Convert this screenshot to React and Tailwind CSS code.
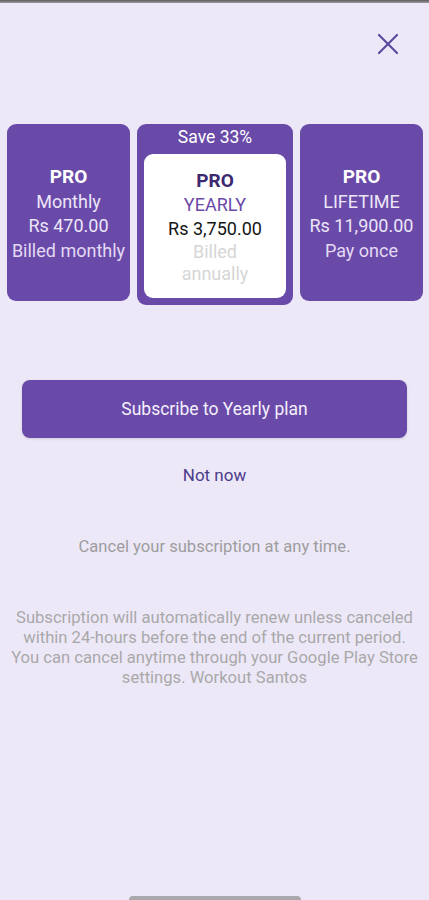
import React from 'react';

const plans = [
  { id: 'monthly', name: 'Monthly', price: 'Rs 470.00', note: 'Billed monthly' },
  { id: 'yearly', name: 'YEARLY', price: 'Rs 3,750.00', note: 'Billed annually' },
  { id: 'lifetime', name: 'LIFETIME', price: 'Rs 11,900.00', note: 'Pay once' },
];

const SideCard = ({ plan }) => (
  <div className="w-[123px] h-[177px] rounded-[9px] bg-[#6a4aa9] flex flex-col items-center justify-center text-center text-[18px] leading-[24.5px] text-[#ece6f8] pt-[3px]">
    <span className="font-bold text-[19px] text-white">PRO</span>
    <span>{plan.name}</span>
    <span>{plan.price}</span>
    <span className="text-[#e3daf3] whitespace-nowrap">{plan.note}</span>
  </div>
);

const App = () => {
  const selected = plans[1];

  return (
    <div className="relative w-[429px] h-[900px] bg-[#ede8f8] overflow-hidden" style={{ fontFamily: 'Roboto, "Noto Sans", sans-serif' }}>
      <div className="h-[3px] bg-gradient-to-b from-[#5e5e5e] to-[#9a9a9a]" />

      {/* Cerrar */}
      <div className="flex justify-end pr-[29px] pt-[29px]">
        <button className="w-[24px] h-[24px] flex items-center justify-center text-[#5b4a9c]">
          <svg width="24" height="24" viewBox="0 0 24 24" fill="none" stroke="currentColor" strokeWidth="2.2" strokeLinecap="round">
            <line x1="3" y1="3" x2="21" y2="21" />
            <line x1="21" y1="3" x2="3" y2="21" />
          </svg>
        </button>
      </div>

      {/* Planes */}
      <div className="flex items-start gap-[7px] pl-[7px] mt-[68px]">
        <SideCard plan={plans[0]} />
        <div className="w-[156px] h-[181px] rounded-[9px] bg-[#6a4aa9] flex flex-col px-[7px] pb-[7px]">
          <div className="h-[30px] pb-[4px] flex items-center justify-center text-white text-[17.5px]">Save 33%</div>
          <div className="flex-1 rounded-[9px] bg-white flex flex-col items-center justify-center text-center text-[18px] leading-[24px] px-[6px] pt-[2px]">
            <span className="font-bold text-[19px] text-[#3b2a6e]">PRO</span>
            <span className="text-[#6a4aa9]">{selected.name}</span>
            <span className="text-[#151515]">{selected.price}</span>
            <span className="text-[#d6d6d6] leading-[22px] px-[16px]">{selected.note}</span>
          </div>
        </div>
        <SideCard plan={plans[2]} />
      </div>

      {/* Acciones */}
      <div className="px-[22px] mt-[75px]">
        <button className="w-full h-[58px] rounded-[8px] bg-[#6a4aa9] text-[#f4f0fb] text-[17.5px] shadow-sm">
          Subscribe to Yearly plan
        </button>
      </div>
      <div className="text-center mt-[25px] text-[17px] text-[#4c3b8a]">Not now</div>

      <p className="text-center mt-[46px] text-[16.6px] text-[#9d9d9d]">Cancel your subscription at any time.</p>

      <p className="text-center mt-[49px] px-[9px] text-[16.6px] leading-[20px] text-[#a9a9a9]">
        Subscription will automatically renew unless canceled within 24-hours before the end of the current period. You can cancel anytime through your Google Play Store settings. Workout Santos
      </p>

      <div className="absolute bottom-0 left-[129px] w-[172px] h-[4px] bg-[#a9a9ad] rounded-t-sm" />
    </div>
  );
};

export default App;
